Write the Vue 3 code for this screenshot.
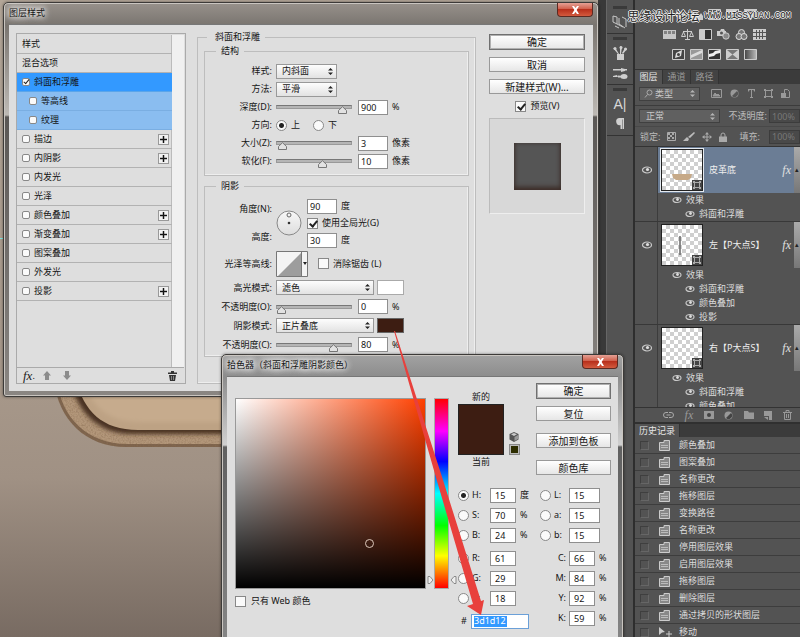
<script setup>
import { ref } from 'vue'

const styles = ref([
  { name: '斜面和浮雕', on: true, kind: 'active' },
  { name: '等高线', on: false, kind: 'sub' },
  { name: '纹理', on: false, kind: 'sub' },
  { name: '描边', on: false, plus: true },
  { name: '内阴影', on: false, plus: true },
  { name: '内发光', on: false },
  { name: '光泽', on: false },
  { name: '颜色叠加', on: false, plus: true },
  { name: '渐变叠加', on: false, plus: true },
  { name: '图案叠加', on: false },
  { name: '外发光', on: false },
  { name: '投影', on: false, plus: true },
])

const depth = ref(900)
const size = ref(3)
const soften = ref(10)
const direction = ref('up')
const angle = ref(90)
const altitude = ref(30)
const globalLight = ref(true)
const antiAlias = ref(false)
const highlightOpacity = ref(0)
const shadowOpacity = ref(80)
const preview = ref(true)

const channel = ref('H')
const webOnly = ref(false)
const hex = ref('3d1d12')
const groups = ref([
  [
    { k: 'H', v: 15, u: '度' },
    { k: 'S', v: 70, u: '%' },
    { k: 'B', v: 24, u: '%' },
  ],
  [
    { k: 'R', v: 61, u: '' },
    { k: 'G', v: 29, u: '' },
    { k: 'B', id: 'Blue', v: 18, u: '' },
  ],
])
const lab = ref([
  { k: 'L', v: 15 },
  { k: 'a', v: 15 },
  { k: 'b', v: 15 },
])
const cmyk = ref([
  { k: 'C', v: 66 },
  { k: 'M', v: 84 },
  { k: 'Y', v: 92 },
  { k: 'K', v: 59 },
])

const layers = [
  { name: '皮革底', active: true, shape: 'dish', fx: ['斜面和浮雕'] },
  { name: '左【P大点S】', shape: 'line', fx: ['斜面和浮雕', '颜色叠加', '投影'] },
  { name: '右【P大点S】', fx: ['斜面和浮雕', '颜色叠加'] },
]

const history = [
  '颜色叠加', '图案叠加', '名称更改', '拖移图层', '变换路径', '名称更改',
  '停用图层效果', '启用图层效果', '拖移图层', '删除图层', '通过拷贝的形状图层', '移动',
]
</script>

<template>
  <div class="desktop">
    <main class="canvas">
      <svg class="art" viewBox="0 0 606 637" preserveAspectRatio="xMinYMin slice" aria-hidden="true">
        <defs>
          <linearGradient id="backdrop" x1="0" y1="0" x2="0" y2="1">
            <stop offset="0" stop-color="#b3a698" />
            <stop offset=".62" stop-color="#a69789" />
            <stop offset=".75" stop-color="#a09184" />
            <stop offset="1" stop-color="#786b62" />
          </linearGradient>
          <filter id="soft"><feGaussianBlur stdDeviation="2" /></filter>
          <filter id="grain" x="0" y="0" width="1" height="1">
            <feTurbulence type="fractalNoise" baseFrequency=".6" numOctaves="2" result="n" />
            <feColorMatrix in="n" type="matrix" values="0 0 0 0 .25  0 0 0 0 .15  0 0 0 0 .08  0 0 0 1.2 -.45" />
            <feComposite in2="SourceGraphic" operator="in" result="g" />
            <feMerge><feMergeNode in="SourceGraphic" /><feMergeNode in="g" /></feMerge>
          </filter>
        </defs>
        <rect width="606" height="637" fill="url(#backdrop)" />
        <path d="M54 380C58 420 86 447 126 447H606V360H54Z" fill="#7d634d" filter="url(#grain)" />
        <path d="M57 380C61 418 88 444 127 444H606V360H57Z" fill="#b3977a" filter="url(#grain)" />
        <path d="M71 380C75 409 97 434 131 434H606V360H71Z" fill="#4a3022" filter="url(#soft)" />
        <path d="M76 380C84 411 102 430 138 430H606V360H76Z" fill="#bda284" />
        <path d="M84 380C92 408 108 422 142 422H606V360H84Z" fill="#c6ab8d" filter="url(#soft)" />
        <path d="M0 238.500H4" stroke="#7fe8e0" />
      </svg>
    </main>

    <aside class="dock">
      <div class="dock-group short">
        <i class="grip"></i>
        <svg width="18" height="16" viewBox="0 0 18 16" fill="none" stroke="#c8c8c8">
          <path d="M2 2l4 1v7l-4-2zM6 10l6 3M8 4v6l6 4M11 3l4 2v8" /><path d="M4 12l4 2" />
        </svg>
      </div>
      <div class="dock-group">
        <i class="grip"></i>
        <svg width="16" height="16" viewBox="0 0 16 16" fill="#cfcfcf">
          <path d="M5 9h7v6H5z" /><path d="M1 3l3 1 3 5H6zM8 1l2 1-1 7H8zM13 3l2 1-4 5-1-1z" /><circle cx="3" cy="3.500" r="1.500" /><circle cx="9" cy="2.500" r="1.500" /><circle cx="13.500" cy="4" r="1.500" />
        </svg>
        <svg width="16" height="14" viewBox="0 0 16 14" fill="#cfcfcf">
          <path d="M1 3h8v1.500H1zM9 2l4 1v2l-4 1zM13 3h2v1.500h-2zM5 9l-4 1v1h5zM6 9.500l6 .5v1.500H6z" /><ellipse cx="12" cy="10.500" rx="3.500" ry="2.500" />
        </svg>
      </div>
      <div class="dock-group">
        <i class="grip"></i>
        <span class="glyph">A|</span>
        <svg width="12" height="14" viewBox="0 0 12 14" fill="#d0d0d0">
          <path d="M5 1h5v11H8.500V2.500H8V12H6.500V8A3.500 3.500 0 0 1 5 1z" />
        </svg>
      </div>
    </aside>

    <aside class="panels">
      <section class="adjust">
        <div class="adjust-row">
          <svg width="13" height="11" viewBox="0 0 13 11" fill="#ccc"><circle cx="6.500" cy="5.500" r="3" /><path d="M6 0h1v11H6zM0 5h13v1H0z" /></svg>
          <svg width="13" height="11" viewBox="0 0 13 11" fill="#ccc"><path d="M0 11V7l2-1 1-4 2 4 2-2 2 3 2-3 2 3v4z" /></svg>
          <svg width="13" height="11" viewBox="0 0 13 11" fill="none" stroke="#ccc"><path d="M.5.5h12v10H.5zM1 10Q6 9 7 5T12 1M4.500 0v11M8.500 0v11" /></svg>
          <svg width="13" height="11" viewBox="0 0 13 11"><path fill="#ccc" d="M0 0h13v11H0z" /><path fill="#444" d="M1 10L12 1v9z" /></svg>
          <svg width="13" height="11" viewBox="0 0 13 11" fill="none" stroke="#ccc"><path d="M1 1h11L6.500 10z" stroke-width="2" /></svg>
        </div>
        <div class="adjust-row">
          <svg width="13" height="11" viewBox="0 0 13 11"><path fill="#c6c6c6" d="M0 1h13v9H0z" /><path fill="#555" d="M1 2h3v3H1zM5 2h3v3H5zM9 2h3v3H9z" opacity=".6" /></svg>
          <svg width="13" height="11" viewBox="0 0 13 11" fill="none" stroke="#ccc"><path d="M6.500 0v10M2 2.500h9M2.500 3L.5 7.500h4zM10.500 3l-2 4.500h4zM4 10.500h5" /></svg>
          <svg width="13" height="11" viewBox="0 0 13 11"><path fill="#333" stroke="#ccc" d="M.5.5h12v10H.5z" /><path fill="#ccc" d="M1 1h5v9H1z" /></svg>
          <svg width="13" height="11" viewBox="0 0 13 11"><path fill="#ccc" d="M0 2h3l1-2h3l1 2h1v5H0z" /><circle cx="4.500" cy="4" r="1.500" fill="#555" /><circle cx="9" cy="7" r="3.200" fill="#888" stroke="#ccc" /></svg>
          <svg width="13" height="11" viewBox="0 0 13 11" fill="#777" stroke="#ddd"><circle cx="6.500" cy="3.500" r="3" /><circle cx="4" cy="7.500" r="3" /><circle cx="9" cy="7.500" r="3" /></svg>
          <svg width="13" height="11" viewBox="0 0 13 11"><path fill="#ccc" d="M0 0h13v11H0z" /><path stroke="#555" d="M0 3.500h13M0 7.500h13M3.500 1v9M6.500 1v9M9.500 1v9" /></svg>
        </div>
        <div class="adjust-row">
          <svg width="13" height="11" viewBox="0 0 13 11"><path fill="#444" stroke="#ccc" d="M.5.5h12v10H.5z" /><path fill="#ddd" d="M3 9l1-5 6-3-1 6z" /><circle cx="6.500" cy="5.500" r="1.500" fill="#444" /></svg>
          <svg width="13" height="11" viewBox="0 0 13 11"><path fill="#999" stroke="#ccc" d="M.5.5h12v10H.5z" /><path fill="#ddd" d="M1 6l11-5v3L1 9z" /></svg>
          <svg width="13" height="11" viewBox="0 0 13 11"><path fill="#333" stroke="#ccc" d="M.5.5h12v10H.5z" /><path fill="#eee" d="M1 5l4-1 2-2 5-1v3L8 5 6 7 1 8z" /></svg>
          <svg width="13" height="11" viewBox="0 0 13 11"><path fill="#777" stroke="#ccc" d="M.5.5h12v10H.5z" /><path fill="#ccc" d="M1 1l5.500 4.500L1 10zM12 1L6.500 5.500 12 10z" /></svg>
          <svg width="13" height="11" viewBox="0 0 13 11"><defs><linearGradient id="gmap"><stop stop-color="#444" /><stop offset="1" stop-color="#bbb" /></linearGradient></defs><path fill="url(#gmap)" stroke="#ccc" d="M.5.5h12v10H.5z" /></svg>
        </div>
      </section>

      <nav class="tabs">
        <button class="tab on">图层</button><button class="tab">通道</button><button class="tab">路径</button>
      </nav>
      <div class="bar filter">
        <label class="dark-select kind">
          <svg width="9" height="9" viewBox="0 0 9 9" fill="none" stroke="#aaa"><circle cx="5.500" cy="3.500" r="2.500" /><path d="M3.500 5.500L1 8.500" /></svg>
          <select aria-label="过滤类型"><option>类型</option></select>
          <svg class="updown" width="5" height="7" viewBox="0 0 5 7"><path d="M2.500 0L5 2.500H0zM2.500 7L0 4.500h5z" /></svg>
        </label>
        <svg width="11" height="9" viewBox="0 0 11 9" fill="none" stroke="#999"><path d="M.5.500h10v8H.5z" /><path d="M2 7l2-3 2 2 1-1 2 2z" fill="#999" /></svg>
        <svg width="9" height="9" viewBox="0 0 9 9"><circle cx="4.500" cy="4.500" r="4" fill="#999" /><path d="M7 2a3.500 3.500 0 0 1-5 5z" fill="#555" /></svg>
        <svg width="9" height="9" viewBox="0 0 9 9" fill="#999"><path d="M1 0h7v2.500H7L6.500 1H5v7h1v1H3V8h1V1H2.500L2 2.500H1z" /></svg>
        <svg width="9" height="9" viewBox="0 0 9 9" fill="none" stroke="#999"><path d="M1.500 1.500h6v6h-6z" /><path d="M0 0h2v2H0zM7 0h2v2H7zM0 7h2v2H0zM7 7h2v2H7z" fill="#999" stroke="none" /></svg>
        <svg width="9" height="9" viewBox="0 0 9 9" fill="none" stroke="#999"><path d="M3.500.5h3l2 2v6h-5z" /><path d="M0 4h5v5H0z" fill="#999" stroke="none" /></svg>
      </div>
      <div class="bar blend">
        <label class="dark-select mode">
          <select aria-label="混合模式"><option>正常</option></select>
          <svg class="updown" width="5" height="7" viewBox="0 0 5 7"><path d="M2.500 0L5 2.500H0zM2.500 7L0 4.500h5z" /></svg>
        </label>
        <label class="pct" for="lay-op">不透明度:</label><input id="lay-op" class="dark-input" value="100%" disabled />
      </div>
      <div class="bar lock">
        <span>锁定:</span>
        <svg width="9" height="9" viewBox="0 0 9 9"><path d="M.5.500h8v8h-8z" fill="none" stroke="#aaa" /><path d="M1 1h2v2H1zM5 1h2v2H5zM3 3h2v2H3zM1 5h2v2H1zM5 5h2v2H5z" fill="#aaa" /></svg>
        <svg width="12" height="10" viewBox="0 0 12 10" fill="#bbb"><path d="M11 0L5 5l2 1 5-5zM4 5L0 9h5l1-2z" /></svg>
        <svg width="10" height="10" viewBox="0 0 10 10" fill="#aaa"><path d="M5 0l2 2.500H3zM5 10L3 7.500h4zM0 5l2.500-2v4zM10 5L7.500 3v4zM4.500 2h1v6h-1zM2 4.500h6v1H2z" /></svg>
        <svg width="8" height="10" viewBox="0 0 8 10"><path d="M2 5V3a2 2 0 0 1 4 0v2" fill="none" stroke="#aaa" /><path d="M0 4.500h8V10H0z" fill="#aaa" /></svg>
        <label class="pct" for="lay-fill">填充:</label><input id="lay-fill" class="dark-input" value="100%" disabled />
      </div>

      <ul class="layers">
        <li v-for="l in layers" :key="l.name" class="layer">
          <div class="layer-head" :class="{ active: l.active }">
            <span class="eye-cell"><svg width="10" height="8" viewBox="0 0 10 8"><ellipse cx="5" cy="4" rx="4.500" ry="3" fill="none" stroke="#c9c9c9" stroke-width="1.200" /><circle cx="5.500" cy="3.500" r="1.600" fill="#ddd" /></svg></span>
            <span class="thumb">
              <svg v-if="l.shape" width="40" height="40" viewBox="0 0 40 40">
                <path v-if="l.shape === 'dish'" d="M10 24h20l-1 4-3 2H14l-3-2z" fill="#c6a988" />
                <path v-else d="M18 11v19" stroke="#666" stroke-width="1.500" />
              </svg>
              <svg class="badge" width="10" height="10" viewBox="0 0 10 10"><path d="M0 0h10v10H0z" fill="#444" /><path d="M2.500 2.500h5v5h-5z" fill="none" stroke="#aaa" /><path d="M1 1h2v2H1zM7 1h2v2H7zM1 7h2v2H1zM7 7h2v2H7z" fill="#aaa" /></svg>
            </span>
            <span class="layer-name">{{ l.name }}</span>
            <span class="fx">fx</span>
            <span class="fold">▴</span>
          </div>
          <div class="effects">
            <div class="effect"><svg width="10" height="8" viewBox="0 0 10 8"><ellipse cx="5" cy="4" rx="4" ry="2.500" fill="none" stroke="#c9c9c9" stroke-width="1.200" /><circle cx="5.500" cy="3.500" r="1.400" fill="#ddd" /></svg>效果</div>
            <div v-for="f in l.fx" :key="f" class="effect child"><svg width="10" height="8" viewBox="0 0 10 8"><ellipse cx="5" cy="4" rx="4" ry="2.500" fill="none" stroke="#c9c9c9" stroke-width="1.200" /><circle cx="5.500" cy="3.500" r="1.400" fill="#ddd" /></svg>{{ f }}</div>
          </div>
        </li>
      </ul>

      <div class="layer-tools">
        <svg width="11" height="8" viewBox="0 0 11 8" fill="none" stroke="#aaa"><path d="M5 1.500H3a2.500 2.500 0 0 0 0 5h2M6 1.500h2a2.500 2.500 0 0 1 0 5H6M3.500 4h4" /></svg>
        <span class="fx dim">fx</span>
        <svg width="10" height="8" viewBox="0 0 10 8"><path d="M0 0h10v8H0z" fill="#999" /><circle cx="5" cy="4" r="2" fill="#444" /></svg>
        <svg width="9" height="9" viewBox="0 0 9 9"><circle cx="4.500" cy="4.500" r="4" fill="#999" /><path d="M7 2a3.500 3.500 0 0 1-5 5z" fill="#444" /></svg>
        <svg width="10" height="8" viewBox="0 0 10 8" fill="#999"><path d="M0 0h4l1 1.500h5V8H0z" /></svg>
        <svg width="8" height="9" viewBox="0 0 8 9" fill="#999"><path d="M0 0h8v9H5V5H0z" /><path d="M0 6h4v3z" /></svg>
        <svg width="9" height="10" viewBox="0 0 9 10" fill="none" stroke="#999"><path d="M0 2.500h9M3 2V.5h3V2M1.500 3v6.500h6V3M3.500 4v4M5.500 4v4" /></svg>
      </div>

      <nav class="tabs second"><button class="tab on">历史记录</button></nav>
      <ol class="history">
        <li v-for="(h, i) in history" :key="i">
          <i class="slot"></i>
          <svg v-if="h !== '移动'" width="11" height="11" viewBox="0 0 11 11"><path d="M.5 2.500H5V.500h5.500v10H.5z" fill="#888" stroke="#ccc" /><path d="M2 5.500h7M2 7.500h7" stroke="#bbb" /></svg>
          <svg v-else width="14" height="11" viewBox="0 0 14 11" fill="#ccc"><path d="M0 0l6 5-3 .5L0 8zM9.500 4h1v2.500H13v1h-2.500V10h-1V7.500H7v-1h2.500z" /></svg>
          <span>{{ h }}</span>
        </li>
      </ol>
    </aside>

    <section class="window style-window" aria-label="图层样式">
      <header class="titlebar"><h1>图层样式</h1><button class="close" aria-label="关闭"><svg width="9" height="8" viewBox="0 0 9 8"><path d="M1 0h2l1.500 2L6 0h2L5.700 4 8 8H6L4.500 6 3 8H1l2.300-4z" fill="#fff" /></svg></button></header>
      <div class="style-body">
        <div class="style-list">
          <ul>
            <li>样式</li>
            <li>混合选项</li>
            <li v-for="s in styles" :key="s.name" :class="s.kind">
              <label><input v-model="s.on" class="tick small" type="checkbox" />{{ s.name }}</label>
              <button v-if="s.plus" class="plus" :aria-label="'添加' + s.name"><svg width="7" height="7" viewBox="0 0 7 7"><path d="M3 0h1v7H3zM0 3h7v1H0z" stroke="#222" stroke-width=".5" /></svg></button>
            </li>
          </ul>
          <footer>
            <span class="fx ink">fx</span><span class="dot">.</span>
            <svg width="8" height="9" viewBox="0 0 8 9" fill="#8c8c8c"><path d="M4 0l4 4.500H6V9H2V4.500H0z" /></svg>
            <svg width="8" height="9" viewBox="0 0 8 9" fill="#8c8c8c"><path d="M4 9L0 4.500h2V0h4v4.500h2z" /></svg>
            <svg class="bin" width="9" height="10" viewBox="0 0 9 10"><path d="M0 1.500h3V0h3v1.500h3V3H0zM1 4h7l-1 6H2z" fill="#333" /><path d="M3.500 5v4M5.500 5v4" stroke="#bbb" stroke-width=".6" /></svg>
          </footer>
        </div>

        <fieldset class="outer">
          <legend>斜面和浮雕</legend>
          <fieldset class="inner">
            <legend>结构</legend>
            <div class="row"><label for="st">样式:</label><span class="select w60"><select id="st"><option>内斜面</option></select><svg class="updown" width="5" height="7" viewBox="0 0 5 7"><path d="M2.500 0L5 2.500H0zM2.500 7L0 4.500h5z" /></svg></span></div>
            <div class="row"><label for="me">方法:</label><span class="select w60"><select id="me"><option>平滑</option></select><svg class="updown" width="5" height="7" viewBox="0 0 5 7"><path d="M2.500 0L5 2.500H0zM2.500 7L0 4.500h5z" /></svg></span></div>
            <div class="row"><label for="de">深度(D):</label><input v-model="depth" class="slide" type="range" min="1" max="960" aria-label="深度" /><input id="de" v-model="depth" class="num" /><span>%</span></div>
            <div class="row"><span class="lab">方向:</span><label class="opt"><input v-model="direction" type="radio" class="dial-radio" value="up" />上</label><label class="opt"><input v-model="direction" type="radio" class="dial-radio" value="down" />下</label></div>
            <div class="row"><label for="si">大小(Z):</label><input v-model="size" class="slide" type="range" max="250" aria-label="大小" /><input id="si" v-model="size" class="num" /><span>像素</span></div>
            <div class="row"><label for="so">软化(F):</label><input v-model="soften" class="slide" type="range" max="16" aria-label="软化" /><input id="so" v-model="soften" class="num" /><span>像素</span></div>
          </fieldset>
          <fieldset class="inner shade">
            <legend>阴影</legend>
            <div class="light">
              <div class="light-labels"><label for="an">角度(N):</label><label for="al">高度:</label></div>
              <svg width="26" height="26" viewBox="0 0 26 26"><defs><linearGradient id="knob" x1="0" y1="0" x2="0" y2="1"><stop stop-color="#f8f8f8" /><stop offset="1" stop-color="#ddd" /></linearGradient></defs><circle cx="13" cy="13" r="12" fill="url(#knob)" stroke="#888" /><circle cx="13" cy="13" r="1.300" fill="#333" /><circle cx="13" cy="5" r="2" fill="none" stroke="#666" /></svg>
              <div class="light-fields">
                <span class="pair"><input id="an" v-model="angle" class="num" />度</span>
                <label class="pair"><input v-model="globalLight" type="checkbox" class="tick" />使用全局光(G)</label>
                <span class="pair"><input id="al" v-model="altitude" class="num" />度</span>
              </div>
            </div>
            <div class="row tall"><span class="lab">光泽等高线:</span>
              <button class="contour" aria-label="光泽等高线"><svg width="32" height="26" viewBox="0 0 32 26"><path d="M.5.500h31v25H.5z" fill="#f4f4f4" stroke="#777" /><path d="M2 25L25 2v23z" fill="#9d9d9d" /><path d="M25.500 0v26" stroke="#777" /><path d="M27 11h4l-2 3z" fill="#222" /></svg></button>
              <label class="opt alias"><input v-model="antiAlias" type="checkbox" class="tick" />消除锯齿 (L)</label>
            </div>
            <div class="row r19"><label for="hm">高光模式:</label><span class="select w97"><select id="hm"><option>滤色</option></select><svg class="updown" width="5" height="7" viewBox="0 0 5 7"><path d="M2.500 0L5 2.500H0zM2.500 7L0 4.500h5z" /></svg></span><button class="chip white" aria-label="高光颜色"></button></div>
            <div class="row r19"><label for="ho">不透明度(O):</label><input v-model="highlightOpacity" class="slide" type="range" aria-label="高光不透明度" /><input id="ho" v-model="highlightOpacity" class="num" /><span>%</span></div>
            <div class="row r19"><label for="sm">阴影模式:</label><span class="select w97"><select id="sm"><option>正片叠底</option></select><svg class="updown" width="5" height="7" viewBox="0 0 5 7"><path d="M2.500 0L5 2.500H0zM2.500 7L0 4.500h5z" /></svg></span><button class="chip" aria-label="阴影颜色"></button></div>
            <div class="row r19"><label for="sp">不透明度(C):</label><input v-model="shadowOpacity" class="slide" type="range" aria-label="阴影不透明度" /><input id="sp" v-model="shadowOpacity" class="num" /><span>%</span></div>
          </fieldset>
        </fieldset>

        <div class="side">
          <button class="btn primary">确定</button>
          <button class="btn">取消</button>
          <button class="btn">新建样式(W)...</button>
          <label class="preview-label"><input v-model="preview" type="checkbox" class="tick" />预览(V)</label>
          <div class="preview"><i></i></div>
        </div>
      </div>
    </section>

    <section class="window picker-window" aria-label="拾色器">
      <header class="titlebar"><h1>拾色器（斜面和浮雕阴影颜色）</h1><button class="close" aria-label="关闭"><svg width="9" height="8" viewBox="0 0 9 8"><path d="M1 0h2l1.500 2L6 0h2L5.700 4 8 8H6L4.500 6 3 8H1l2.300-4z" fill="#fff" /></svg></button></header>
      <div class="picker-body">
        <div class="spectrum">
          <div class="spectrum-row">
            <div class="field"><i class="cursor"></i></div>
            <svg width="7" height="8" viewBox="0 0 7 8"><path d="M1 .5h2L6 4 3 7.500H1z" fill="#eee" stroke="#888" /></svg>
            <div class="hue"></div>
            <svg width="7" height="8" viewBox="0 0 7 8"><path d="M6 .5H4L1 4l3 3.500h2z" fill="#eee" stroke="#888" /></svg>
          </div>
          <label class="web"><input v-model="webOnly" type="checkbox" class="tick" />只有 Web 颜色</label>
        </div>
        <div class="values">
          <div class="values-top">
            <div class="compare"><span>新的</span><i></i><span>当前</span></div>
            <div class="warn">
              <svg width="10" height="10" viewBox="0 0 10 10"><path d="M5 0l4.500 2v5.500L5 10 .5 7.500V2z" fill="#555" /><path d="M5 1l3 1.300L5 4 2 2.300z" fill="#ccc" /><path d="M5.500 5L9 3v4L5.500 9z" fill="#999" /></svg>
              <i></i>
            </div>
            <div class="actions">
              <button class="btn primary">确定</button>
              <button class="btn">复位</button>
              <button class="btn gap">添加到色板</button>
              <button class="btn gap">颜色库</button>
            </div>
          </div>
          <div class="channels">
            <div class="col">
              <div v-for="(g, gi) in groups" :key="gi" class="group">
                <div v-for="c in g" :key="c.k" class="chan">
                  <input v-model="channel" type="radio" class="dial-radio" :value="c.id || c.k" :aria-label="c.k" />
                  <label :for="'ch' + gi + c.k">{{ c.k }}:</label><input :id="'ch' + gi + c.k" v-model="c.v" class="num slim" /><span>{{ c.u }}</span>
                </div>
              </div>
              <div class="chan hexrow"><label for="hex">#</label><span class="hexbox"><input id="hex" v-model="hex" size="5" /></span></div>
            </div>
            <div class="col right">
              <div class="group">
                <div v-for="c in lab" :key="c.k" class="chan">
                  <input v-model="channel" type="radio" class="dial-radio" :value="c.k" :aria-label="c.k" />
                  <label :for="'lab' + c.k">{{ c.k }}:</label><input :id="'lab' + c.k" v-model="c.v" class="num" />
                </div>
              </div>
              <div class="group">
                <div v-for="c in cmyk" :key="c.k" class="chan ink-chan">
                  <label :for="'ink' + c.k">{{ c.k }}:</label><input :id="'ink' + c.k" v-model="c.v" class="num slim" /><span>%</span>
                </div>
              </div>
            </div>
          </div>
        </div>
      </div>
    </section>

    <svg class="pointer" width="100" height="290" viewBox="0 0 100 290" aria-hidden="true">
      <path d="M3 1h1L52 150 90 271l3-1-3 15-14-9 6-2L46 151z" fill="#e8403c" />
    </svg>
    <div class="watermark"><b>思缘设计论坛</b><span>WWW.MISSYUAN.COM</span></div>
  </div>
</template>

<style>
body { margin: 0; background: #535353; }
</style>

<style scoped>
* { box-sizing: border-box; }
.desktop {
  position: relative;
  display: flex;
  height: 100vh;
  overflow: hidden;
  font: 9px/12px "Noto Sans", "Noto Sans CJK SC", sans-serif;
  color: #151515;
  white-space: nowrap;
}
ul, ol { list-style: none; margin: 0; padding: 0; }
svg { display: block; flex: none; }
button, input, select { font: inherit; color: inherit; margin: 0; padding: 0; border: 0; border-radius: 0; }
select { appearance: none; background: none; outline: 0; }

.canvas { flex: 1; min-width: 0; background: #a09184; border-right: 8px solid #393939; overflow: hidden; }
.art { width: 100%; height: 100%; }

/* icon dock */
.dock { width: 29px; background: #535353; border-right: 2px solid #2e2e2e; border-left: 1px solid #666; }
.dock-group { height: 51px; border-bottom: 1px solid #333; display: flex; flex-direction: column; align-items: center; gap: 5px; padding-top: 3px; }
.dock-group.short { height: 34px; padding-top: 6px; }
.grip { width: 14px; height: 3px; background: #3a3a3a; flex: none; }
.glyph { font: 14px/16px "Liberation Sans", sans-serif; color: #d8d8d8; }

/* right panels */
.panels { width: 165px; background: #535353; color: #dcdcdc; display: flex; flex-direction: column; }
.adjust { height: 70px; padding-top: 9px; display: flex; flex-direction: column; gap: 9px; border-bottom: 1px solid #333; flex: none; }
.adjust-row { display: flex; justify-content: center; gap: 5px; padding-right: 7px; }
.tabs { display: flex; background: #3b3b3b; height: 14px; flex: none; }
.tab { width: 28px; background: #434343; color: #999; border-right: 1px solid #333; line-height: 12px; }
.tab.on { background: #535353; color: #e6e6e6; }
.second { border-top: 2px solid #303030; height: 15px; }
.second .tab { width: 45px; }
.bar { display: flex; align-items: center; padding-left: 4px; flex: none; color: #bbb; }
.filter { height: 22px; gap: 8px; border-bottom: 1px solid #3c3c3c; padding-bottom: 2px; }
.blend { height: 20px; }
.lock { height: 21px; gap: 7px; border-bottom: 1px solid #333; border-top: 1px solid #484848; padding-left: 5px; }
.dark-select { display: flex; align-items: center; height: 14px; background: #606060; border: 1px solid #404040; padding: 0 4px; }
.dark-select select { flex: 1; min-width: 0; padding-left: 2px; color: #c8c8c8; }
.dark-select .updown { fill: #b5b5b5; }
.kind { width: 61px; margin-right: 3px; }
.mode { width: 81px; }
.pct { margin-left: auto; margin-right: 2px; }
.dark-input { width: 31px; height: 14px; background: #494949; border: 1px solid #3c3c3c; color: #777; padding-left: 2px; }

.layers { flex: none; height: 260px; overflow: hidden; }
.layer { border-bottom: 1px solid #383838; }
.layer-head { display: flex; align-items: center; height: 46px; background: linear-gradient(to right, #535353 22px, #3c3c3c 22px, #3c3c3c 23px, transparent 23px); }
.layer-head.active { background: linear-gradient(to right, #535353 22px, #3c3c3c 22px, #3c3c3c 23px, #6b7d95 23px); }
.eye-cell { width: 23px; display: flex; justify-content: center; }
.thumb {
  position: relative; width: 42px; height: 42px; margin-left: 3px; border: 1px solid #222; overflow: hidden; flex: none;
  background: repeating-conic-gradient(#cfcfcf 0 25%, #fff 0 50%) 0 0 / 8px 8px;
}
.active .thumb { outline: 1px solid #e4e9ef; }
.badge { position: absolute; right: 0; bottom: 0; }
.layer-name { padding-left: 6px; flex: 1; color: #eee; }
.fx { font: italic 12px/12px "Liberation Serif", serif; color: #e0e0e0; }
.layer-head .fx { margin-right: -1px; }
.fx.dim { color: #999; }
.fx.ink { color: #222; font-size: 13px; }
.fold { align-self: stretch; width: 6px; margin-left: 4px; background: linear-gradient(#aaa, #777); color: #222; font-size: 7px; line-height: 46px; text-align: center; overflow: hidden; }
.effects { padding: 0 0 0 23px; background: linear-gradient(to right, #535353 22px, #3c3c3c 22px, #3c3c3c 23px, transparent 23px); }
.effect { display: flex; align-items: center; height: 14px; gap: 4px; padding-left: 14px; }
.effect.child { padding-left: 27px; }
.layer-tools { display: flex; align-items: center; justify-content: space-between; height: 15px; padding: 0 8px 0 28px; border-top: 1px solid #333; flex: none; }
.history { flex: 1; min-height: 0; overflow: hidden; }
.history li { display: flex; align-items: center; height: 17px; border-bottom: 1px solid #3d3d3d; padding-left: 5px; }
.history svg { margin-left: 10px; }
.history li span { margin-left: 9px; }
.history li:last-child span { margin-left: 6px; }
.slot { width: 9px; height: 9px; border: 1px solid #3f3f3f; border-right-color: #666; border-bottom-color: #666; }

/* windows */
.window { position: absolute; border: 1px solid #3c3a38; border-radius: 5px 5px 3px 3px; padding: 0 5px 5px; box-shadow: inset 0 0 0 1px #c9c5c0, 0 0 3px #0007; }
.style-window { left: 3px; top: 2px; width: 596px; background: linear-gradient(#97918b 0, #7a7570 22px, #bdb9b4 112px, #5a5755 114px, #8a8682); }
.picker-window { left: 221px; top: 354px; width: 403px; background: linear-gradient(#a2a2a2 0, #8c8c8c 22px, #d0d0d0 90px, #606060 92px, #8a8a8a); }
.titlebar { display: flex; justify-content: space-between; height: 21px; }
h1 { margin: 4px 0 0; font: inherit; text-shadow: 0 0 6px #fff, 0 0 6px #fff, 0 0 9px #fff; }
.close { display: flex; align-items: center; justify-content: center; width: 36px; height: 14px; border: 1px solid #5b2a22; border-top: 0; border-radius: 0 0 4px 4px; background: linear-gradient(#e5a195, #d0604c 45%, #b8301c 50%, #d35a3e); }

.style-body { display: grid; grid-template-columns: 170px 1fr 96px; padding: 6px 8px 7px 7px; background: #dedede; border: 1px solid #777; border-width: 1px 0 0; }
.style-list { margin-top: 2px; border: 1px solid #aaa; padding: 1px 1px 0 0; display: flex; flex-direction: column; }
.style-list ul { flex: 1; border-right: 12px solid #f0f0f0; box-shadow: inset -1px 0 #bbb; }
.style-list li { display: flex; align-items: center; justify-content: space-between; height: 19px; padding: 0 3px 0 5px; border-bottom: 1px solid #b2b2b2; }
.style-list li label { display: flex; align-items: center; gap: 4px; }
.style-list li.active { background: #3399ff; border-color: #5aa5ea; }
.style-list li.sub { background: #8abdf0; padding-left: 12px; border-color: #7aaee2; }
.plus { display: flex; align-items: center; justify-content: center; width: 11px; height: 11px; background: #f2f2f2; border: 1px solid #999; }
.style-list footer { display: flex; align-items: center; height: 16px; border-top: 1px solid #aaa; padding: 0 7px 0 6px; }
.style-list footer svg { margin-left: 12px; }
.dot { width: 3px; margin-right: -4px; }
.style-list footer .bin { margin-left: auto; }

fieldset { margin: 0; min-width: 0; border: 1px solid #bdbdbd; box-shadow: inset -1px -1px #eee; }
legend { height: 12px; }
.outer { margin: 0 13px 0 11px; padding: 2px 6px 26px; }
.outer > legend { margin-left: 3px; padding: 0 5px 0 8px; }
.inner { padding: 5px 0; }
.inner > legend { margin-left: 11px; padding: 0 5px; }
.shade { margin-top: 4px; padding-bottom: 2px; }
.row { display: flex; align-items: center; height: 18px; gap: 4px; }
.row > label:first-child, .lab { width: 67px; text-align: right; flex: none; }
.r19 { height: 19px; }
.tall { height: 29px; }
.select { position: relative; display: flex; height: 15px; border: 1px solid #999; background: linear-gradient(#fdfdfd, #e2e2e2); }
.select select { flex: 1; padding-left: 5px; line-height: 12px; }
.select .updown { position: absolute; right: 3px; top: 3px; fill: #222; pointer-events: none; }
.w60 { width: 61px; }
.w97 { width: 98px; }
.slide { appearance: none; background: none; width: 76px; height: 14px; margin-right: 2px; }
.slide::-webkit-slider-runnable-track { height: 4px; background: #b5b5b5; border: 1px solid #999; border-top-color: #777; }
.slide::-webkit-slider-thumb {
  appearance: none; width: 9px; height: 8px; border: 0; border-radius: 0;
  background: url("data:image/svg+xml,%3Csvg xmlns='http://www.w3.org/2000/svg' width='9' height='8'%3E%3Cpath d='M4.5 .7L8.500 4.500V7.500H.5V4.500z' fill='%23e2e2e2' stroke='%23777'/%3E%3C/svg%3E") no-repeat;
}
.num { width: 30px; height: 15px; border: 1px solid #8f8f8f; background: #fff; padding: 0 2px; outline: 0; }
.dial-radio { appearance: none; width: 11px; height: 11px; border: 1px solid #888; border-radius: 50%; background: #fafafa; flex: none; }
.dial-radio:checked { background: radial-gradient(circle, #222 0 2px, #fafafa 3px); }
.opt { display: flex; align-items: center; gap: 4px; width: 33px; }
.alias { margin-left: 6px; }
.tick { appearance: none; width: 11px; height: 11px; border: 1px solid #888; background: #fafafa; position: relative; flex: none; }
.tick:checked::after { content: ""; position: absolute; left: 3px; top: 0; width: 3px; height: 6px; border: solid #222; border-width: 0 2px 2px 0; transform: rotate(40deg); }
.tick.small { width: 8px; height: 8px; border-radius: 2px; }
.tick.small:checked::after { left: 2px; top: -1px; width: 2px; height: 5px; border-width: 0 1px 1px 0; }
.light { display: flex; align-items: center; gap: 4px; height: 52px; }
.light-labels { width: 67px; display: flex; flex-direction: column; gap: 16px; text-align: right; }
.light-fields { display: flex; flex-direction: column; gap: 2px; margin-left: 1px; }
.pair { display: flex; align-items: center; gap: 4px; height: 15px; }
.contour { width: 32px; height: 26px; background: none; }
.chip { width: 27px; height: 15px; border: 1px solid #666; background: #3d1d12; margin-left: -1px; }
.chip.white { background: #fff; border-color: #aaa; }

.side { display: flex; flex-direction: column; align-items: stretch; padding-top: 3px; }
.btn { height: 15px; font-size: 10px; line-height: 12px; border: 1px solid #999; background: linear-gradient(#fff, #e6e6e6); }
.btn.primary { height: 16px; border-color: #707070; box-shadow: inset 0 0 0 1px #b0b0b0; }
.side .btn + .btn { margin-top: 7px; }
.preview-label { display: flex; align-items: center; justify-content: center; gap: 5px; height: 24px; }
.preview { display: flex; align-items: center; justify-content: center; height: 96px; background: #d8d8d8; border: 1px solid #bbb; border-right-color: #eee; border-bottom-color: #eee; }
.preview i { width: 47px; height: 47px; background: #555; box-shadow: inset 0 -3px 5px #3d2d28, inset 0 0 4px #403a38; }

.picker-body { display: flex; background: #dedede; border-top: 1px solid #777; padding: 6px 7px 30px 8px; }
.spectrum { padding-top: 15px; }
.spectrum-row { display: flex; align-items: flex-end; }
.spectrum-row svg { margin-bottom: 5px; margin-left: 1px; }
.field {
  position: relative; width: 191px; height: 191px; border: 1px solid #999;
  background: linear-gradient(to top, #000, transparent), linear-gradient(to right, #fff, #ff4000);
}
.cursor { position: absolute; left: 68%; top: 74%; width: 9px; height: 9px; border: 1px solid #ddc8bb; border-radius: 50%; }
.hue { width: 15px; height: 191px; border: 1px solid #aaa; background: linear-gradient(#f00, #f0f 17%, #00f 33%, #0ff 50%, #0f0 67%, #ff0 83%, #f00); }
.web { display: flex; align-items: center; gap: 5px; margin-top: 6px; }
.values { flex: 1; }
.values-top { display: flex; height: 102px; }
.compare { display: flex; flex-direction: column; align-items: center; padding-top: 8px; width: 46px; margin-left: 1px; }
.compare i { width: 46px; height: 51px; background: #3d1d12; border: 1px solid #222; margin: 1px 0; }
.warn { padding-top: 49px; margin-left: 5px; display: flex; flex-direction: column; gap: 2px; }
.warn i { width: 11px; height: 11px; border: 1px solid #888; background: #2d2d00; box-shadow: inset 0 0 0 1px #bbb; }
.actions { display: flex; flex-direction: column; width: 75px; margin-left: auto; }
.actions .btn { margin-top: 7px; }
.actions .primary { margin-top: 0; }
.actions .gap { margin-top: 12px; }
.channels { display: grid; grid-template-columns: 82px 1fr; padding-left: 1px; }
.group { margin-bottom: 3px; }
.chan { display: flex; align-items: center; height: 20px; gap: 3px; }
.chan label { width: 15px; }
.chan .num { padding-left: 4px; width: 31px; }
.chan .slim { width: 26px; }
.chan span { margin-left: 1px; }
.right label { width: 12px; }
.right .ink-chan label { margin-left: 14px; text-align: right; }
.hexrow label { width: 9px; padding-left: 3px; }
.hexbox { border: 1px solid #6ba0d8; background: #fff; width: 58px; height: 15px; padding: 1px 2px; display: flex; }
.hexbox input { width: 33px; background: #3399ff; color: #fff; outline: 0; height: 11px; }

.pointer { position: absolute; left: 391px; top: 330px; pointer-events: none; }
.watermark { position: absolute; right: 9px; top: 8px; display: flex; align-items: center; gap: 5px; color: #222; font: 12px/16px "Noto Sans CJK SC", sans-serif; text-shadow: 1px 0 #eee, -1px 0 #eee, 0 1px #eee, 0 -1px #eee; }
.watermark b { font-weight: 400; }
.watermark span { font: 9px/12px "Liberation Mono", monospace; }
</style>
